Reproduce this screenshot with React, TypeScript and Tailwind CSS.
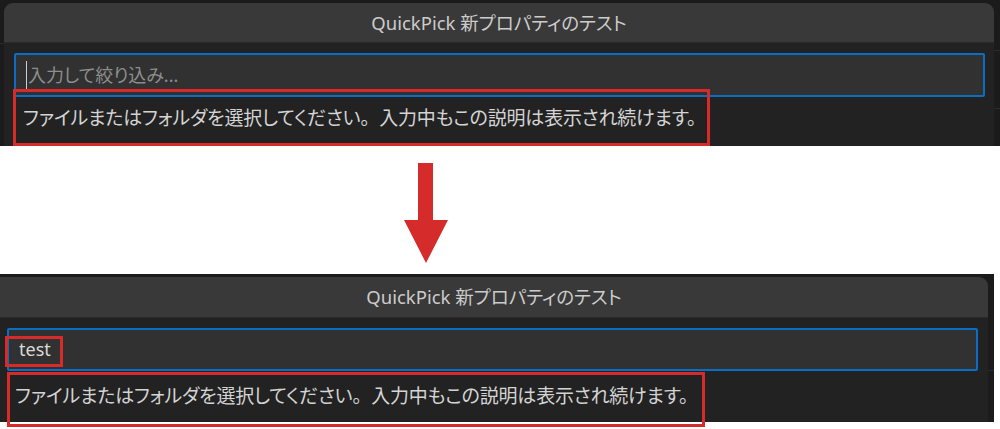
import React from "react";

const jp = "font-['Noto_Sans','Noto_Sans_CJK_JP',sans-serif] [font-feature-settings:'palt']";

function Desc() {
  return (
    <>
      ファイルまたはフォルダを選択してください
      <span className="[font-feature-settings:normal]">。</span>
      入力中もこの説明は表示され続けます。
    </>
  );
}

function RedBox({ className }: { className: string }) {
  return <div className={`pointer-events-none absolute border-[3px] border-[#d52b2b] ${className}`} />;
}

function QuickPickTop() {
  return (
    <div className="relative h-[146px] w-[1000px] bg-[#1b1b1b] pl-[4px] pr-[6px] pt-[3px]">
      <div className="absolute left-0 top-[43px] h-px w-[4px] bg-[#2b2b2b]" />
      <div className="absolute right-0 top-[50px] h-px w-[6px] bg-[#2b2b2b]" />
      <div className="absolute right-0 top-[108px] h-px w-[6px] bg-[#2b2b2b]" />
      <div className="flex h-full flex-col overflow-hidden rounded-t-[9px] bg-[#222222]">
        <div className="flex h-[40px] shrink-0 items-center justify-center border-b border-[#2a2a2a] bg-[#393939] text-[18.5px] text-[#cccccc]">
          <span className={jp}>QuickPick 新プロパティのテスト</span>
        </div>
        <div className="pl-[10px] pr-[9px] pt-[10px]">
          <div className="flex h-[44px] items-center rounded-[2px] border-2 border-[#0a6fc4] bg-[#313131] pl-[10px]">
            <div className="h-[28px] w-px bg-[#cfcfcf]" />
            <span className={`${jp} ml-[1px] text-[18px] text-[#8e8e8e]`}>入力して絞り込み...</span>
          </div>
          <div className={`${jp} pl-[9px] pt-[8px] text-[19px] leading-[26px] tracking-[-0.2px] text-[#d4d4d4]`}>
            <Desc />
          </div>
        </div>
      </div>
      <RedBox className="left-[13px] top-[89px] h-[57px] w-[697px]" />
    </div>
  );
}

function QuickPickBottom() {
  return (
    <div className="relative h-[148px] w-[994px] bg-[#1b1b1b] pr-[6px] pt-[3px]">
      <div className="absolute right-0 top-[96px] h-px w-[6px] bg-[#2b2b2b]" />
      <div className="flex h-full flex-col overflow-hidden rounded-tr-[9px] bg-[#222222]">
        <div className="flex h-[41px] shrink-0 items-center justify-center border-b border-[#2a2a2a] bg-[#393939] text-[18.5px] text-[#cccccc]">
          <span className={jp}>QuickPick 新プロパティのテスト</span>
        </div>
        <div className="pl-[7px] pr-[10px] pt-[10px]">
          <div className="flex h-[43px] items-center rounded-[2px] border-2 border-[#0a6fc4] bg-[#313131] pl-[10px]">
            <span className={`${jp} text-[18px] text-[#d9d9d9]`}>test</span>
          </div>
          <div className={`${jp} pl-[8px] pt-[12px] text-[19px] leading-[26px] tracking-[-0.2px] text-[#d4d4d4]`}>
            <Desc />
          </div>
        </div>
      </div>
      <RedBox className="left-[5px] top-[62px] h-[31px] w-[58px]" />
      <RedBox className="left-[7px] top-[98px] h-[55px] w-[698px]" />
    </div>
  );
}

export default function App() {
  return (
    <div className="h-[429px] w-[1000px] overflow-hidden bg-white">
      <QuickPickTop />
      <div className="flex h-[128px] items-start pl-[404px] pt-[17px]">
        <svg width="44" height="100" viewBox="0 0 44 100">
          <path d="M14 0 H29 V57 H44 L22 100 L0 57 H14 Z" fill="#d52b2b" />
        </svg>
      </div>
      <QuickPickBottom />
    </div>
  );
}
